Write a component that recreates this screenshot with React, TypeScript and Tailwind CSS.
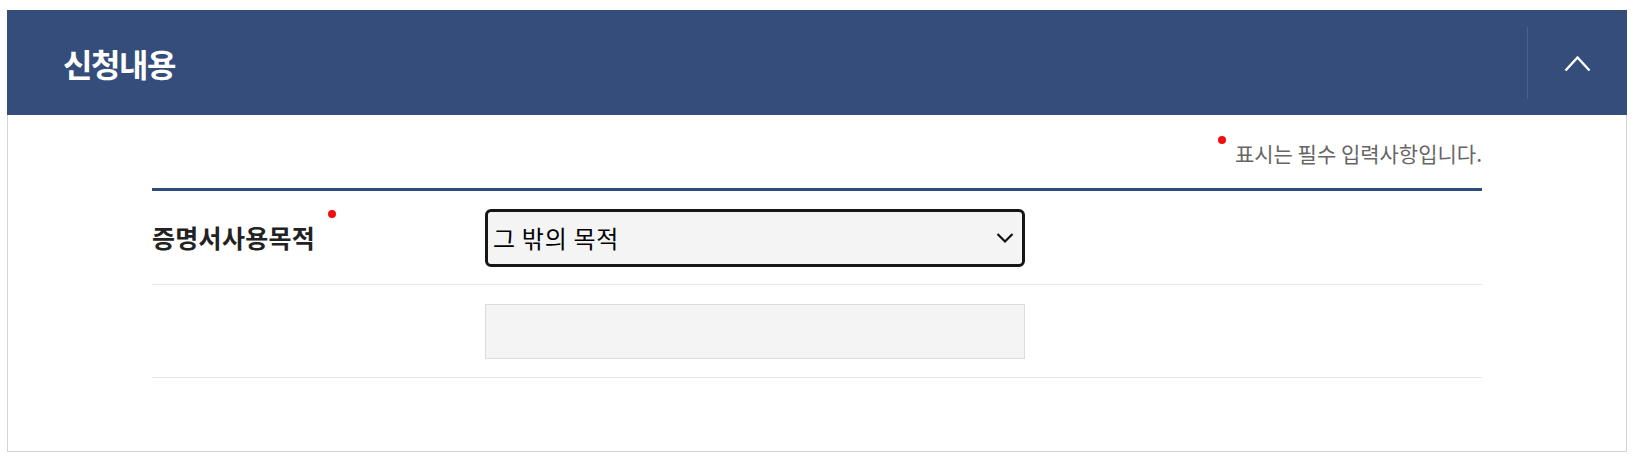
export default function App() {
  return (
    <div className="min-h-[460px] bg-white pt-[10px] pl-[7px] pr-[9px] pb-2 font-['Noto_Sans_CJK_KR',sans-serif]">
      <section className="border border-[#d4d4d4] border-t-0">
        <header className="flex h-[105px] items-center bg-[#344d7a] -mx-px">
          <h2 className="flex-1 pl-[56px] text-[32px] font-bold tracking-[-1.4px] text-white">신청내용</h2>
          <button className="flex h-[72px] w-[100px] items-center justify-center border-l border-[#4a6190]">
            <svg width="27" height="18" viewBox="0 0 27 18" fill="none" stroke="white" strokeWidth="2.4">
              <path d="M1.5 16.5 13.5 3.5 25.5 16.5" />
            </svg>
          </button>
        </header>

        <div className="px-[144px] pb-[73px]">
          <p className="flex h-[73px] items-center justify-end pt-1 text-[21px] tracking-[0px] text-[#666]">
            <span className="mr-[9px] -mt-[28px] h-2 w-2 rounded-full bg-[#f10f0f]" />
            표시는 필수 입력사항입니다.
          </p>

          <div className="border-t-[3px] border-[#2f4a7c]">
            <div className="flex h-[94px] items-center border-b border-[#e8e8e8]">
              <div className="w-[333px] flex items-start">
                <span className="text-[25px] font-bold tracking-[0.3px] text-[#222]">증명서사용목적</span>
                <span className="ml-[13px] mt-[-9px] h-2 w-2 rounded-full bg-[#f10f0f]" />
              </div>
              <div className="relative flex h-[58px] w-[540px] items-center rounded-[6px] border-[3px] border-[#161616] bg-[#f4f4f4] pl-[5px]">
                <span className="text-[24px] tracking-[0.7px] text-black">그 밖의 목적</span>
                <svg className="absolute right-[8px] top-1/2 -translate-y-1/2" width="18" height="11" viewBox="0 0 18 11" fill="none" stroke="#111" strokeWidth="2.2">
                  <path d="M1.5 1.5 9 9 16.5 1.5" />
                </svg>
              </div>
            </div>
            <div className="flex h-[93px] items-center border-b border-[#e8e8e8]">
              <div className="w-[333px]" />
              <div className="h-[55px] w-[540px] border border-[#dcdcdc] bg-[#f4f4f4]" />
            </div>
          </div>
        </div>
      </section>
    </div>
  )
}
